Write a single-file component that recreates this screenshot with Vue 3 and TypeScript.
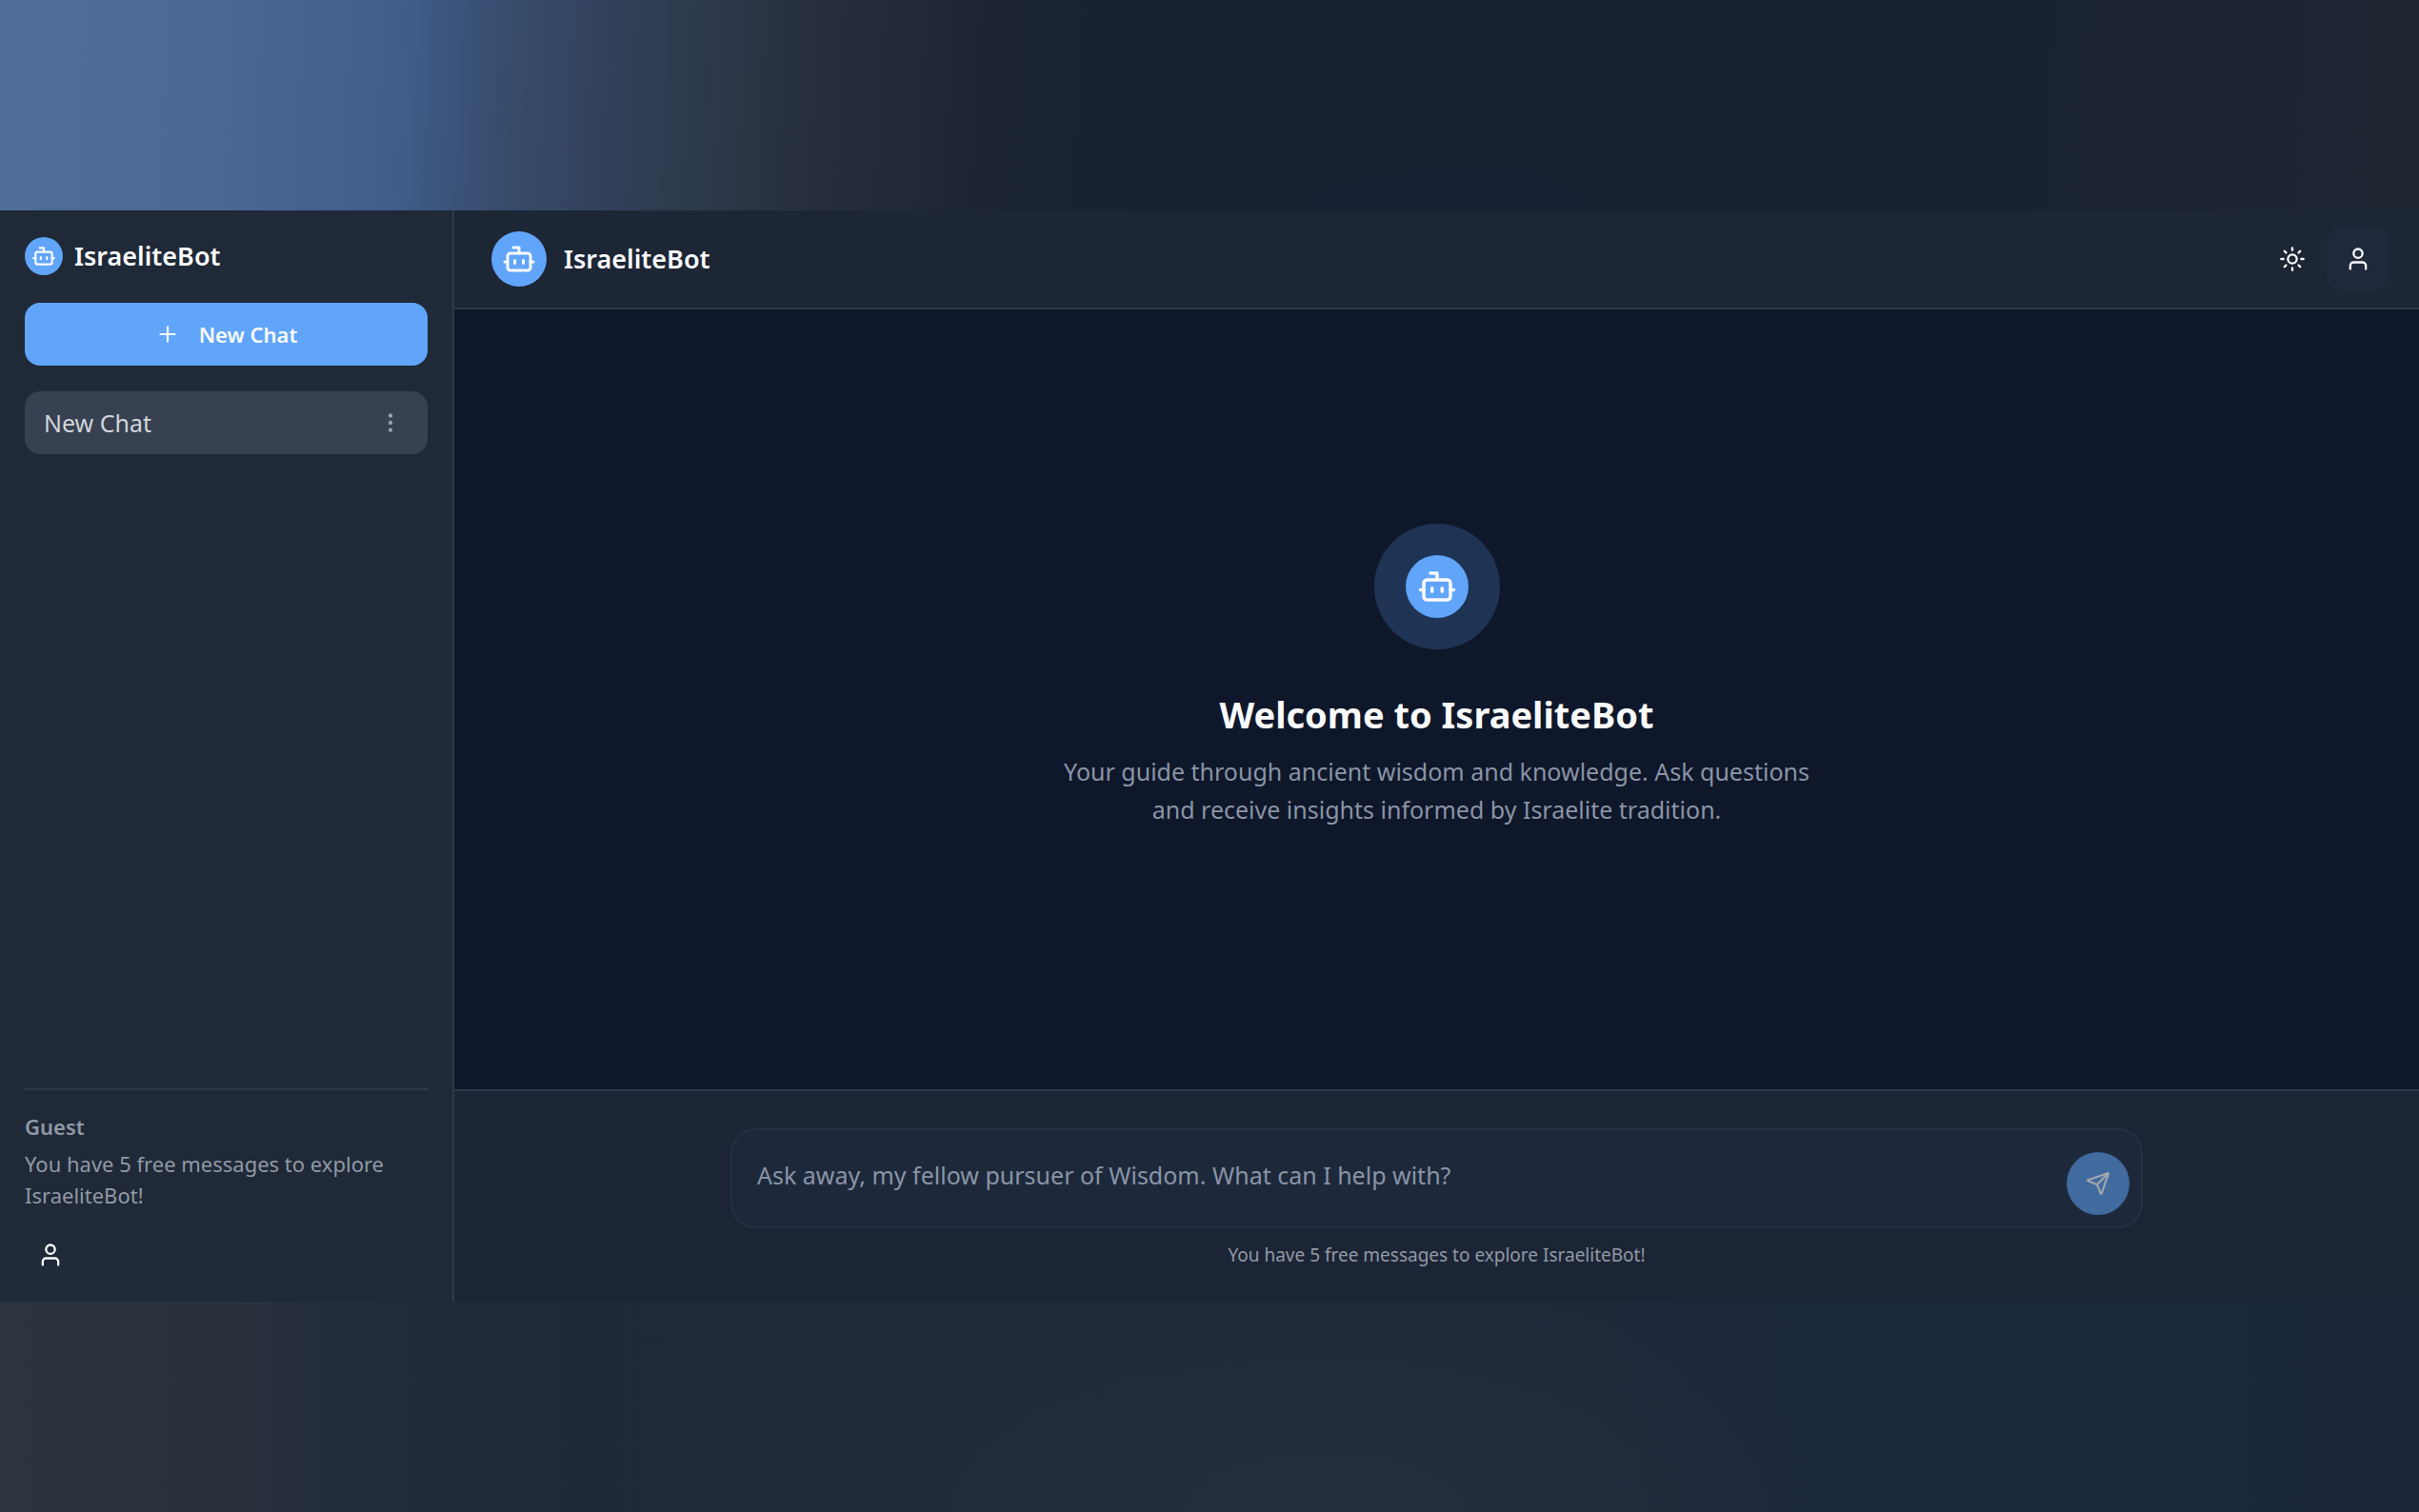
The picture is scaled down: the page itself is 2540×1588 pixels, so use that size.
<script setup lang="ts">
import { ref } from 'vue'

interface Chat {
  id: number
  title: string
}

const botName = 'IsraeliteBot'
const quota = 'You have 5 free messages to explore IsraeliteBot!'
const chats = ref<Chat[]>([{ id: 1, title: 'New Chat' }])
const draft = ref('')
</script>

<template>
  <svg class="sprite" aria-hidden="true">
    <symbol id="bot" viewBox="0 0 24 24">
      <path d="M12 8V4H8" />
      <rect x="4" y="8" width="16" height="12" rx="2" />
      <path d="M2 14h2M20 14h2M15 13v2M9 13v2" />
    </symbol>
    <symbol id="user" viewBox="0 0 24 24">
      <circle cx="12" cy="7" r="4" />
      <path d="M19 21v-3a3 3 0 0 0-3-3H8a3 3 0 0 0-3 3v3" />
    </symbol>
  </svg>
  <div class="page">
    <div class="backdrop top"></div>
    <div class="app">
      <aside class="sidebar">
        <div class="brand">
          <span class="avatar small"><svg class="icon"><use href="#bot" /></svg></span>
          <h2 class="name">{{ botName }}</h2>
        </div>
        <button class="new-chat" type="button">
          <svg class="icon" viewBox="0 0 24 24"><path d="M5 12h14M12 5v14" /></svg>
          New Chat
        </button>
        <nav class="chats" aria-label="Chats">
          <div v-for="chat in chats" :key="chat.id" class="chat">
            <a class="chat-link" href="#">{{ chat.title }}</a>
            <button class="more" type="button" aria-label="Chat options">
              <svg class="icon" viewBox="0 0 24 24">
                <circle cx="12" cy="5" r="1" />
                <circle cx="12" cy="12" r="1" />
                <circle cx="12" cy="19" r="1" />
              </svg>
            </button>
          </div>
        </nav>
        <footer class="account">
          <strong class="role">Guest</strong>
          <p class="quota">{{ quota }}</p>
          <button class="icon-button" type="button" aria-label="Sign in">
            <svg class="icon"><use href="#user" /></svg>
          </button>
        </footer>
      </aside>

      <main class="main">
        <header class="header">
          <span class="avatar medium"><svg class="icon"><use href="#bot" /></svg></span>
          <h2 class="name">{{ botName }}</h2>
          <div class="actions">
            <button class="icon-button" type="button" aria-label="Toggle theme">
              <svg class="icon" viewBox="0 0 24 24">
                <circle cx="12" cy="12" r="4" />
                <path d="M12 2v2M12 20v2M4.930 4.930l1.410 1.410M17.660 17.660l1.410 1.410M2 12h2M20 12h2M6.340 17.660l-1.410 1.410M19.070 4.930l-1.410 1.410" />
              </svg>
            </button>
            <button class="icon-button filled" type="button" aria-label="Profile">
              <svg class="icon"><use href="#user" /></svg>
            </button>
          </div>
        </header>

        <section class="hero">
          <div class="halo">
            <span class="avatar large"><svg class="icon"><use href="#bot" /></svg></span>
          </div>
          <h1 class="title">Welcome to {{ botName }}</h1>
          <p class="lead">
            Your guide through ancient wisdom and knowledge. Ask questions<br />
            and receive insights informed by Israelite tradition.
          </p>
        </section>

        <div class="composer">
          <form class="box" @submit.prevent>
            <textarea
              v-model="draft"
              class="prompt"
              rows="1"
              aria-label="Message"
              placeholder="Ask away, my fellow pursuer of Wisdom. What can I help with?"
            ></textarea>
            <button class="send" type="submit" aria-label="Send">
              <svg class="icon" viewBox="0 0 24 24">
                <path d="M14.536 21.686a.5.5 0 0 0 .937-.024l6.500-19a.496.496 0 0 0-.635-.635l-19 6.500a.5.5 0 0 0-.024.937l7.930 3.180a2 2 0 0 1 1.112 1.110z" />
                <path d="m21.854 2.147-10.940 10.939" />
              </svg>
            </button>
          </form>
          <p class="caption">{{ quota }}</p>
        </div>
      </main>
    </div>
    <div class="backdrop bottom"></div>
  </div>
</template>

<style>
body {
  margin: 0;
  background: #1b2738;
}
</style>

<style scoped>
.page {
  display: flex;
  flex-direction: column;
  min-height: 100vh;
  color: #f9fafb;
  font-family: 'Noto Sans', 'Open Sans', sans-serif;
}
.page *,
.page {
  box-sizing: border-box;
}
.sprite {
  position: absolute;
  width: 0;
  height: 0;
}
h1,
h2,
p {
  margin: 0;
}
button {
  padding: 0;
  border: 0;
  background: none;
  color: inherit;
  font: inherit;
}
.icon {
  display: block;
  flex: none;
  width: 26px;
  height: 26px;
  fill: none;
  stroke: currentColor;
  stroke-width: 2;
  stroke-linecap: round;
  stroke-linejoin: round;
}

.backdrop.top {
  height: 221px;
  background:
    radial-gradient(ellipse 400px 110px at 1500px 221px, #17213699 0%, transparent 100%),
    linear-gradient(93deg, #4e6d99 0, #4a6894 240px, #405d8b 420px, #374b6b 540px, #2f3c51 700px, #272f3c 860px, #1c2433 1040px, #182231 1140px, #172130 1600px, #172130 2040px, #1b2331 2260px, #1e2632 2540px);
}
.backdrop.bottom {
  flex: 1;
  background:
    radial-gradient(ellipse 560px 240px at 1390px 222px, #252f3f 0%, #252f3f00 100%),
    linear-gradient(90deg, #2c343f 0, #28313c 240px, #1f2a38 480px, #1d2939 600px, #1e2a39 1000px, #1d2939 1700px, #1b273a 1900px, #1b283c 2180px, #1a2637 2540px);
}

.app {
  display: flex;
  height: 1146px;
}
.sidebar {
  display: flex;
  flex: none;
  flex-direction: column;
  width: 477px;
  padding: 28px 26px 16px;
  border-right: 2px solid #303b4a;
  background: #1f2937;
}
.brand {
  display: flex;
  align-items: center;
  gap: 12px;
}
.avatar {
  display: grid;
  flex: none;
  place-items: center;
  border-radius: 50%;
  background: #60a5fa;
}
.small {
  width: 40px;
  height: 40px;
}
.medium {
  width: 58px;
  height: 58px;
}
.medium .icon {
  width: 36px;
  height: 36px;
}
.large {
  width: 66px;
  height: 66px;
}
.large .icon {
  width: 42px;
  height: 42px;
}
.name {
  font-size: 27px;
  font-weight: 600;
  line-height: 40px;
}
.new-chat {
  display: flex;
  align-items: center;
  justify-content: center;
  gap: 20px;
  height: 66px;
  margin-top: 29px;
  border-radius: 16px;
  background: #60a5fa;
  font-size: 22px;
  font-weight: 600;
}
.chats {
  flex: 1;
  margin-top: 27px;
}
.chat {
  display: flex;
  align-items: center;
  height: 66px;
  padding: 0 26px 0 20px;
  border-radius: 16px;
  background: #374151;
  color: #d1d5db;
}
.chat-link {
  flex: 1;
  color: inherit;
  font-size: 25px;
  text-decoration: none;
}
.more {
  color: #9ca3af;
}
.account {
  padding-top: 22px;
  border-top: 2px solid #303b4a;
  color: #9199a6;
  font-size: 22px;
  line-height: 33px;
}
.role {
  display: block;
  font-weight: 600;
}
.quota {
  margin: 6px 0 13px;
}
.icon-button {
  display: grid;
  place-items: center;
  width: 54px;
  height: 66px;
  border-radius: 16px;
  color: #f9fafb;
}
.icon-button .icon {
  width: 28px;
  height: 28px;
}

.main {
  display: flex;
  flex: 1;
  flex-direction: column;
  background: #0f172a;
}
.header {
  display: flex;
  align-items: center;
  gap: 18px;
  height: 104px;
  padding: 0 31px 0 39px;
  border-bottom: 2px solid #2d3848;
  background: #1d2635;
}
.actions {
  display: flex;
  gap: 3px;
  margin-left: auto;
}
.actions .icon-button {
  width: 66px;
}
.filled {
  background: #1e293b;
}
.hero {
  display: flex;
  flex: 1;
  flex-direction: column;
  align-items: center;
  justify-content: center;
  padding-bottom: 50px;
}
.halo {
  display: grid;
  place-items: center;
  width: 132px;
  height: 132px;
  border-radius: 50%;
  background: #1f3454;
}
.title {
  margin-top: 40px;
  font-size: 38px;
  font-weight: 700;
  line-height: 56px;
}
.lead {
  margin-top: 12px;
  color: #8a94a6;
  font-size: 25px;
  line-height: 40px;
  text-align: center;
}
.composer {
  display: flex;
  flex-direction: column;
  align-items: center;
  height: 223px;
  padding: 39px 40px 0;
  border-top: 2px solid #2d3848;
  background: #1c2535;
}
.box {
  display: flex;
  align-items: flex-end;
  width: 100%;
  max-width: 1483px;
  height: 105px;
  padding: 12px;
  border: 2px solid #243140;
  border-radius: 26px;
  background: #1d293b;
}
.prompt {
  flex: 1;
  height: 76px;
  padding: 14px;
  border: 0;
  outline: 0;
  background: none;
  color: #f9fafb;
  font: inherit;
  font-size: 25px;
  line-height: 40px;
  resize: none;
}
.prompt::placeholder {
  color: #8a94a6;
  opacity: 1;
}
.send {
  display: grid;
  place-items: center;
  width: 66px;
  height: 66px;
  border-radius: 50%;
  background: #416a9f;
  color: #a0a6ae;
}
.caption {
  margin-top: 12px;
  color: #9199a6;
  font-size: 19px;
  line-height: 32px;
}
</style>
